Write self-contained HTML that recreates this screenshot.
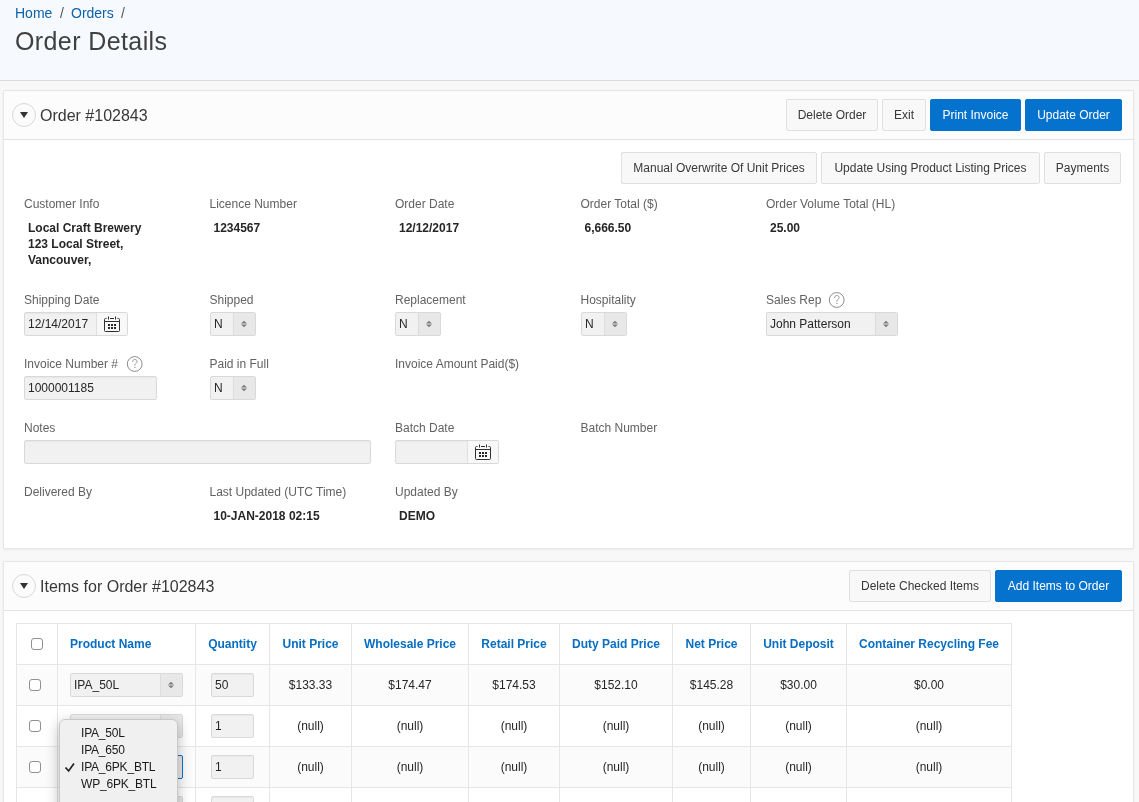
<!DOCTYPE html>
<html><head><meta charset="utf-8">
<style>
*{box-sizing:border-box;margin:0;padding:0}
html,body{width:1139px;height:802px;overflow:hidden}
body{background:#f8f8f8;font-family:"Liberation Sans",sans-serif;color:#262626;position:relative;font-size:12px}
.a{position:absolute;white-space:nowrap}
#wrap{position:absolute;left:0;top:0;width:1139px;height:802px;will-change:transform}
#hdr{left:0;top:0;width:1139px;height:81px;background:#f6f9fd;border-bottom:1px solid #d8dce0}
.bc{font-size:14px;line-height:16px;color:#0d62ab}
.bcs{font-size:14px;line-height:16px;color:#555}
.title{font-size:25px;line-height:32px;color:#404040;letter-spacing:0.4px}
.region{background:#fff;border:1px solid #e6e6e6;border-radius:1px;box-shadow:0 1px 3px rgba(0,0,0,0.05)}
.rhead{background:#fcfcfc;border-bottom:1px solid #e2e2e2}
.circ{width:24px;height:24px;border:1px solid #d9d9d9;border-radius:50%;background:#fbfbfb}
.circ:after{content:"";position:absolute;left:7px;top:8px;border-left:4.5px solid transparent;border-right:4.5px solid transparent;border-top:6px solid #333}
.rtitle{font-size:16px;line-height:24px;color:#383838}
.btn{height:32px;border:1px solid #dfdfdf;background:#f8f8f8;border-radius:2px;color:#383838;font-size:12px;line-height:30px;text-align:center}
.hot{background:#0572ce;border-color:#0572ce;color:#fff}
.lbl{font-size:12px;line-height:16px;color:#626262}
.val{font-size:12px;line-height:16px;font-weight:bold;color:#262626}
.inp{height:24px;border:1px solid #d9d9d9;background:#f1f1f1;box-shadow:inset 0 1px 1px rgba(0,0,0,0.04);border-radius:2px;font-size:12px;line-height:22px;padding-left:3px;color:#262626}
.sel{height:24px;border:1px solid #d9d9d9;background:#f1f1f1;border-radius:2px;font-size:12px;line-height:22px;padding-left:3px;color:#262626}
.sel .arr{position:absolute;right:0;top:0;width:22px;height:22px;background:#e8e8e8;border-left:1px solid #dcdcdc}
.cal{position:absolute;right:0;top:0;width:31px;height:22px;background:#f8f8f8;border-left:1px solid #dfdfdf}
.cal svg{position:absolute;left:7px;top:3px}
.arr svg{position:absolute;left:7px;top:7px}
.help{width:16px;height:16px;border:1px solid #8a8a8a;border-radius:50%;font-size:11px;line-height:14px;text-align:center;color:#8a8a8a}
.th{font-size:12px;font-weight:bold;color:#076ec2;line-height:16px}
.td{font-size:12px;color:#262626;line-height:16px}
.cb{width:12px;height:12px;border:1px solid #8f8f8f;border-radius:3px;background:#fff}
.pop{font-size:12px;line-height:16px;color:#1a1a1a;letter-spacing:-0.2px}
</style></head><body><div id="wrap">
<div id="hdr" class="a"></div>
<div class="a bc" style="left:15px;top:5px">Home</div>
<div class="a bcs" style="left:60px;top:5px">/</div>
<div class="a bc" style="left:71px;top:5px">Orders</div>
<div class="a bcs" style="left:121px;top:5px">/</div>
<div class="a title" style="left:15px;top:25px">Order Details</div>

<!-- Region 1 -->
<div class="a region" style="left:3px;top:90px;width:1131px;height:459px"></div>
<div class="a rhead" style="left:4px;top:91px;width:1129px;height:49px"></div>
<div class="a circ" style="left:12px;top:103px"></div>
<div class="a rtitle" style="left:40px;top:104px">Order #102843</div>
<div class="a btn" style="left:786px;top:99px;width:92px">Delete Order</div>
<div class="a btn" style="left:882px;top:99px;width:44px">Exit</div>
<div class="a btn hot" style="left:930px;top:99px;width:91px">Print Invoice</div>
<div class="a btn hot" style="left:1025px;top:99px;width:97px">Update Order</div>

<div class="a btn" style="left:621px;top:152px;width:196px">Manual Overwrite Of Unit Prices</div>
<div class="a btn" style="left:821px;top:152px;width:219px">Update Using Product Listing Prices</div>
<div class="a btn" style="left:1044px;top:152px;width:77px">Payments</div>

<div class="a lbl" style="left:24px;top:196px">Customer Info</div>
<div class="a val" style="left:28px;top:220px;line-height:16px">Local Craft Brewery<br>123 Local Street,<br>Vancouver,</div>
<div class="a lbl" style="left:209.5px;top:196px">Licence Number</div>
<div class="a val" style="left:213.5px;top:220px">1234567</div>
<div class="a lbl" style="left:395px;top:196px">Order Date</div>
<div class="a val" style="left:399px;top:220px">12/12/2017</div>
<div class="a lbl" style="left:580.5px;top:196px">Order Total ($)</div>
<div class="a val" style="left:584.5px;top:220px">6,666.50</div>
<div class="a lbl" style="left:766px;top:196px">Order Volume Total (HL)</div>
<div class="a val" style="left:770px;top:220px">25.00</div>

<div class="a lbl" style="left:24px;top:292px">Shipping Date</div>
<div class="a inp" style="left:24px;top:312px;width:104px">12/14/2017<div class="cal"><svg width="17" height="17" fill="none" stroke="#303030" stroke-width="1"><path d="M2.5,2.5H1.5A1,1 0 0 0 0.5,3.5V14.5A1,1 0 0 0 1.5,15.5H14.5A1,1 0 0 0 15.5,14.5V3.5A1,1 0 0 0 14.5,2.5H13.5M6,2.5H10M0.5,5.5H15.5M4.5,0.5V3.5M11.5,0.5V3.5"/><g fill="#262626" stroke="none"><rect x="4" y="8" width="2" height="2"/><rect x="7" y="8" width="2" height="2"/><rect x="10" y="8" width="2" height="2"/><rect x="4" y="11" width="2" height="2"/><rect x="7" y="11" width="2" height="2"/><rect x="10" y="11" width="2" height="2"/></g></svg></div></div>
<div class="a lbl" style="left:209.5px;top:292px">Shipped</div>
<div class="a sel" style="left:210px;top:312px;width:46px">N<div class="arr"><svg width="7" height="8"><polygon points="0,3.5 3,0.7 6,3.5" fill="#7d7d7d"/><polygon points="0,4.5 6,4.5 3,7.3" fill="#7d7d7d"/></svg></div></div>
<div class="a lbl" style="left:395px;top:292px">Replacement</div>
<div class="a sel" style="left:395px;top:312px;width:46px">N<div class="arr"><svg width="7" height="8"><polygon points="0,3.5 3,0.7 6,3.5" fill="#7d7d7d"/><polygon points="0,4.5 6,4.5 3,7.3" fill="#7d7d7d"/></svg></div></div>
<div class="a lbl" style="left:580.5px;top:292px">Hospitality</div>
<div class="a sel" style="left:581px;top:312px;width:46px">N<div class="arr"><svg width="7" height="8"><polygon points="0,3.5 3,0.7 6,3.5" fill="#7d7d7d"/><polygon points="0,4.5 6,4.5 3,7.3" fill="#7d7d7d"/></svg></div></div>
<div class="a lbl" style="left:766px;top:292px">Sales Rep</div>
<svg class="a" style="left:827.5px;top:291px" width="18" height="18"><circle cx="8.7" cy="9" r="7.4" fill="none" stroke="#8c8c8c" stroke-width="1"/><path d="M6.6,6.9C6.6,5.4 7.6,4.5 8.9,4.5C10.2,4.5 11.1,5.4 11.1,6.5C11.1,7.5 10.5,8 9.8,8.5C9.2,8.9 8.95,9.4 8.95,10.6" fill="none" stroke="#8c8c8c" stroke-width="0.9"/><circle cx="8.95" cy="12.4" r="0.65" fill="#8c8c8c"/></svg>
<div class="a sel" style="left:766px;top:312px;width:132px">John Patterson<div class="arr"><svg width="7" height="8"><polygon points="0,3.5 3,0.7 6,3.5" fill="#7d7d7d"/><polygon points="0,4.5 6,4.5 3,7.3" fill="#7d7d7d"/></svg></div></div>

<div class="a lbl" style="left:24px;top:356px">Invoice Number #</div>
<svg class="a" style="left:126px;top:355px" width="18" height="18"><circle cx="8.7" cy="9" r="7.4" fill="none" stroke="#8c8c8c" stroke-width="1"/><path d="M6.6,6.9C6.6,5.4 7.6,4.5 8.9,4.5C10.2,4.5 11.1,5.4 11.1,6.5C11.1,7.5 10.5,8 9.8,8.5C9.2,8.9 8.95,9.4 8.95,10.6" fill="none" stroke="#8c8c8c" stroke-width="0.9"/><circle cx="8.95" cy="12.4" r="0.65" fill="#8c8c8c"/></svg>
<div class="a inp" style="left:24px;top:376px;width:133px">1000001185</div>
<div class="a lbl" style="left:209.5px;top:356px">Paid in Full</div>
<div class="a sel" style="left:210px;top:376px;width:46px">N<div class="arr"><svg width="7" height="8"><polygon points="0,3.5 3,0.7 6,3.5" fill="#7d7d7d"/><polygon points="0,4.5 6,4.5 3,7.3" fill="#7d7d7d"/></svg></div></div>
<div class="a lbl" style="left:395px;top:356px">Invoice Amount Paid($)</div>

<div class="a lbl" style="left:24px;top:420px">Notes</div>
<div class="a inp" style="left:24px;top:440px;width:347px"></div>
<div class="a lbl" style="left:395px;top:420px">Batch Date</div>
<div class="a inp" style="left:395px;top:440px;width:104px"><div class="cal"><svg width="17" height="17" fill="none" stroke="#303030" stroke-width="1"><path d="M2.5,2.5H1.5A1,1 0 0 0 0.5,3.5V14.5A1,1 0 0 0 1.5,15.5H14.5A1,1 0 0 0 15.5,14.5V3.5A1,1 0 0 0 14.5,2.5H13.5M6,2.5H10M0.5,5.5H15.5M4.5,0.5V3.5M11.5,0.5V3.5"/><g fill="#262626" stroke="none"><rect x="4" y="8" width="2" height="2"/><rect x="7" y="8" width="2" height="2"/><rect x="10" y="8" width="2" height="2"/><rect x="4" y="11" width="2" height="2"/><rect x="7" y="11" width="2" height="2"/><rect x="10" y="11" width="2" height="2"/></g></svg></div></div>
<div class="a lbl" style="left:580.5px;top:420px">Batch Number</div>

<div class="a lbl" style="left:24px;top:484px">Delivered By</div>
<div class="a lbl" style="left:209.5px;top:484px">Last Updated (UTC Time)</div>
<div class="a val" style="left:213.5px;top:508px">10-JAN-2018 02:15</div>
<div class="a lbl" style="left:395px;top:484px">Updated By</div>
<div class="a val" style="left:399px;top:508px">DEMO</div>

<!-- Region 2 -->
<div class="a region" style="left:3px;top:561px;width:1131px;height:260px"></div>
<div class="a rhead" style="left:4px;top:562px;width:1129px;height:49px"></div>
<div class="a circ" style="left:12px;top:574px"></div>
<div class="a rtitle" style="left:40px;top:575px">Items for Order #102843</div>
<div class="a btn" style="left:849px;top:570px;width:142px">Delete Checked Items</div>
<div class="a btn hot" style="left:995px;top:570px;width:127px">Add Items to Order</div>

<!--TBL-->
<div class="a" style="left:16px;top:623px;width:996px;height:41px;background:#fff"></div>
<div class="a" style="left:16px;top:664px;width:996px;height:41px;background:#fbfbfb"></div>
<div class="a" style="left:16px;top:705px;width:996px;height:41px;background:#fff"></div>
<div class="a" style="left:16px;top:746px;width:996px;height:41px;background:#fbfbfb"></div>
<div class="a" style="left:16px;top:787px;width:996px;height:41px;background:#fff"></div>
<div class="a" style="left:16px;top:623px;width:996px;height:1px;background:#e6e6e6"></div>
<div class="a" style="left:16px;top:664px;width:996px;height:1px;background:#e6e6e6"></div>
<div class="a" style="left:16px;top:705px;width:996px;height:1px;background:#e6e6e6"></div>
<div class="a" style="left:16px;top:746px;width:996px;height:1px;background:#e6e6e6"></div>
<div class="a" style="left:16px;top:787px;width:996px;height:1px;background:#e6e6e6"></div>
<div class="a" style="left:16px;top:623px;width:1px;height:205px;background:#e6e6e6"></div>
<div class="a" style="left:57px;top:623px;width:1px;height:205px;background:#e6e6e6"></div>
<div class="a" style="left:195px;top:623px;width:1px;height:205px;background:#e6e6e6"></div>
<div class="a" style="left:269px;top:623px;width:1px;height:205px;background:#e6e6e6"></div>
<div class="a" style="left:351px;top:623px;width:1px;height:205px;background:#e6e6e6"></div>
<div class="a" style="left:468px;top:623px;width:1px;height:205px;background:#e6e6e6"></div>
<div class="a" style="left:559px;top:623px;width:1px;height:205px;background:#e6e6e6"></div>
<div class="a" style="left:672px;top:623px;width:1px;height:205px;background:#e6e6e6"></div>
<div class="a" style="left:750px;top:623px;width:1px;height:205px;background:#e6e6e6"></div>
<div class="a" style="left:846px;top:623px;width:1px;height:205px;background:#e6e6e6"></div>
<div class="a" style="left:1011px;top:623px;width:1px;height:205px;background:#e6e6e6"></div>
<div class="a cb" style="left:31px;top:638px"></div>
<div class="a th" style="left:70px;top:636px">Product Name</div>
<div class="a th" style="left:196px;width:73px;top:636px;text-align:center">Quantity</div>
<div class="a th" style="left:270px;width:81px;top:636px;text-align:center">Unit Price</div>
<div class="a th" style="left:352px;width:116px;top:636px;text-align:center">Wholesale Price</div>
<div class="a th" style="left:469px;width:90px;top:636px;text-align:center">Retail Price</div>
<div class="a th" style="left:560px;width:112px;top:636px;text-align:center">Duty Paid Price</div>
<div class="a th" style="left:673px;width:77px;top:636px;text-align:center">Net Price</div>
<div class="a th" style="left:751px;width:95px;top:636px;text-align:center">Unit Deposit</div>
<div class="a th" style="left:847px;width:164px;top:636px;text-align:center">Container Recycling Fee</div>
<div class="a cb" style="left:29px;top:679px"></div>
<div class="a sel" style="left:70px;top:673px;width:113px">IPA_50L<div class="arr"><svg width="7" height="8"><polygon points="0,3.5 3,0.7 6,3.5" fill="#7d7d7d"/><polygon points="0,4.5 6,4.5 3,7.3" fill="#7d7d7d"/></svg></div></div>
<div class="a inp" style="left:211px;top:673px;width:43px">50</div>
<div class="a td" style="left:270px;width:81px;top:677px;text-align:center">$133.33</div>
<div class="a td" style="left:352px;width:116px;top:677px;text-align:center">$174.47</div>
<div class="a td" style="left:469px;width:90px;top:677px;text-align:center">$174.53</div>
<div class="a td" style="left:560px;width:112px;top:677px;text-align:center">$152.10</div>
<div class="a td" style="left:673px;width:77px;top:677px;text-align:center">$145.28</div>
<div class="a td" style="left:751px;width:95px;top:677px;text-align:center">$30.00</div>
<div class="a td" style="left:847px;width:164px;top:677px;text-align:center">$0.00</div>
<div class="a cb" style="left:29px;top:720px"></div>
<div class="a sel" style="left:70px;top:714px;width:113px"><div class="arr"><svg width="7" height="8"><polygon points="0,3.5 3,0.7 6,3.5" fill="#7d7d7d"/><polygon points="0,4.5 6,4.5 3,7.3" fill="#7d7d7d"/></svg></div></div>
<div class="a inp" style="left:211px;top:714px;width:43px">1</div>
<div class="a td" style="left:270px;width:81px;top:718px;text-align:center">(null)</div>
<div class="a td" style="left:352px;width:116px;top:718px;text-align:center">(null)</div>
<div class="a td" style="left:469px;width:90px;top:718px;text-align:center">(null)</div>
<div class="a td" style="left:560px;width:112px;top:718px;text-align:center">(null)</div>
<div class="a td" style="left:673px;width:77px;top:718px;text-align:center">(null)</div>
<div class="a td" style="left:751px;width:95px;top:718px;text-align:center">(null)</div>
<div class="a td" style="left:847px;width:164px;top:718px;text-align:center">(null)</div>
<div class="a cb" style="left:29px;top:761px"></div>
<div class="a sel" style="left:70px;top:755px;width:113px">IPA_6PK_BTL<div class="arr"><svg width="7" height="8"><polygon points="0,3.5 3,0.7 6,3.5" fill="#7d7d7d"/><polygon points="0,4.5 6,4.5 3,7.3" fill="#7d7d7d"/></svg></div></div>
<div class="a inp" style="left:211px;top:755px;width:43px">1</div>
<div class="a td" style="left:270px;width:81px;top:759px;text-align:center">(null)</div>
<div class="a td" style="left:352px;width:116px;top:759px;text-align:center">(null)</div>
<div class="a td" style="left:469px;width:90px;top:759px;text-align:center">(null)</div>
<div class="a td" style="left:560px;width:112px;top:759px;text-align:center">(null)</div>
<div class="a td" style="left:673px;width:77px;top:759px;text-align:center">(null)</div>
<div class="a td" style="left:751px;width:95px;top:759px;text-align:center">(null)</div>
<div class="a td" style="left:847px;width:164px;top:759px;text-align:center">(null)</div>
<div class="a cb" style="left:29px;top:802px"></div>
<div class="a sel" style="left:70px;top:796px;width:113px"><div class="arr"><svg width="7" height="8"><polygon points="0,3.5 3,0.7 6,3.5" fill="#7d7d7d"/><polygon points="0,4.5 6,4.5 3,7.3" fill="#7d7d7d"/></svg></div></div>
<div class="a inp" style="left:211px;top:796px;width:43px">1</div>
<!--/TBL-->
<!--POP-->
<div class="a" style="left:70px;top:755px;width:113px;height:24px;border:1.5px solid #0572ce;border-radius:2px"></div>
<div class="a" style="left:59px;top:719px;width:119px;height:110px;background:#f0f0f0;border:1px solid #c9c9c9;border-radius:6px;box-shadow:0 4px 14px rgba(0,0,0,0.28)"></div>
<div class="a pop" style="left:81px;top:725px">IPA_50L</div>
<div class="a pop" style="left:81px;top:742px">IPA_650</div>
<div class="a pop" style="left:81px;top:759px">IPA_6PK_BTL</div>
<div class="a pop" style="left:81px;top:776px">WP_6PK_BTL</div>
<svg class="a" style="left:63px;top:760px" width="14" height="14"><path d="M2.5,7.5L5.6,11L11,3.5" fill="none" stroke="#222" stroke-width="1.7"/></svg>
<!--/POP-->
</div></body></html>
